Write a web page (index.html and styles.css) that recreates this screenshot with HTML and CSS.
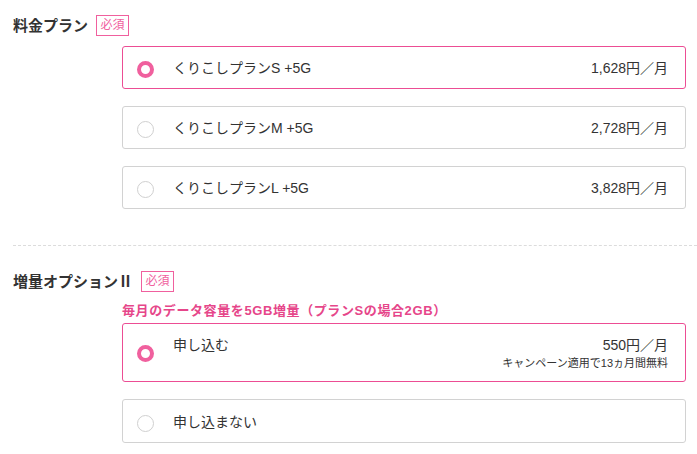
FILE: index.html
```html
<!DOCTYPE html>
<html lang="ja">
<head>
<meta charset="utf-8">
<link rel="stylesheet" href="styles.css">
</head>
<body>
<div class="page">
  <section class="section">
    <div class="heading">
      <h2 class="title">料金プラン</h2>
      <span class="badge">必須</span>
    </div>
    <div class="options">
      <label class="card selected">
        <span class="radio"></span>
        <span class="name">くりこしプランS +5G</span>
        <span class="price"><span class="amount">1,628円／月</span></span>
      </label>
      <label class="card">
        <span class="radio"></span>
        <span class="name">くりこしプランM +5G</span>
        <span class="price"><span class="amount">2,728円／月</span></span>
      </label>
      <label class="card">
        <span class="radio"></span>
        <span class="name">くりこしプランL +5G</span>
        <span class="price"><span class="amount">3,828円／月</span></span>
      </label>
    </div>
  </section>
  <hr class="divider">
  <section class="section section-2">
    <div class="heading">
      <h2 class="title">増量オプションⅡ</h2>
      <span class="badge">必須</span>
    </div>
    <div class="options">
      <p class="note">毎月のデータ容量を5GB増量（プランSの場合2GB）</p>
      <label class="card selected tall">
        <span class="radio"></span>
        <span class="name">申し込む</span>
        <span class="price">
          <span class="amount">550円／月</span>
          <span class="sub">キャンペーン適用で13ヵ月間無料</span>
        </span>
      </label>
      <label class="card last">
        <span class="radio"></span>
        <span class="name">申し込まない</span>
      </label>
    </div>
  </section>
</div>
</body>
</html>
```
FILE: styles.css
```css
html, body {
  margin: 0;
  padding: 0;
  background: #fff;
}
body {
  font-family: "Liberation Sans", "Noto Sans CJK JP", sans-serif;
  color: #333;
}
.page {
  padding: 15px 0 0 13px;
}
.heading {
  display: flex;
  align-items: center;
  gap: 8px;
  height: 21px;
}
.title {
  margin: 0;
  font-size: 15px;
  font-weight: bold;
  color: #333;
  line-height: 21px;
}
.badge {
  box-sizing: border-box;
  width: 33px;
  height: 21px;
  border: 1px solid #f0609e;
  color: #f0609e;
  font-size: 12px;
  line-height: 19px;
  text-align: center;
}
.options {
  margin: 10px 11px 0 109px;
  display: flex;
  flex-direction: column;
  gap: 17px;
}
.card {
  display: flex;
  align-items: flex-start;
  box-sizing: border-box;
  min-height: 43px;
  padding: 11px 17px 10px 14px;
  border: 1px solid #d2d2d2;
  border-radius: 3px;
  font-size: 14px;
  line-height: 20px;
  color: #333;
}
.card.last {
  min-height: 44px;
  padding-top: 12px;
}
.card.selected {
  border-color: #ec4d94;
}
.radio {
  box-sizing: border-box;
  flex: none;
  width: 17px;
  height: 17px;
  border: 1px solid #d0d0d0;
  border-radius: 50%;
  margin-top: 2px;
  margin-right: 19px;
  align-self: center;
}
.card.tall .radio {
  margin-top: 0;
}
.selected .radio {
  border: 4.5px solid #f0609e;
}
.name {
  flex: 1;
}
.price {
  display: flex;
  flex-direction: column;
  align-items: flex-end;
}
.sub {
  font-size: 11px;
  line-height: 16px;
}
.divider {
  border: 0;
  border-top: 1px dashed #dcdcdc;
  margin: 36px 0 0 0;
  height: 0;
}
.section-2 {
  padding-top: 25px;
}
.section-2 .options {
  gap: 0;
  margin-top: 10px;
}
.note {
  margin: 0 0 3px 0;
  color: #e6468a;
  font-size: 13px;
  font-weight: bold;
  line-height: 18px;
  letter-spacing: 0.6px;
}
.section-2 .card + .card {
  margin-top: 17px;
}
```
